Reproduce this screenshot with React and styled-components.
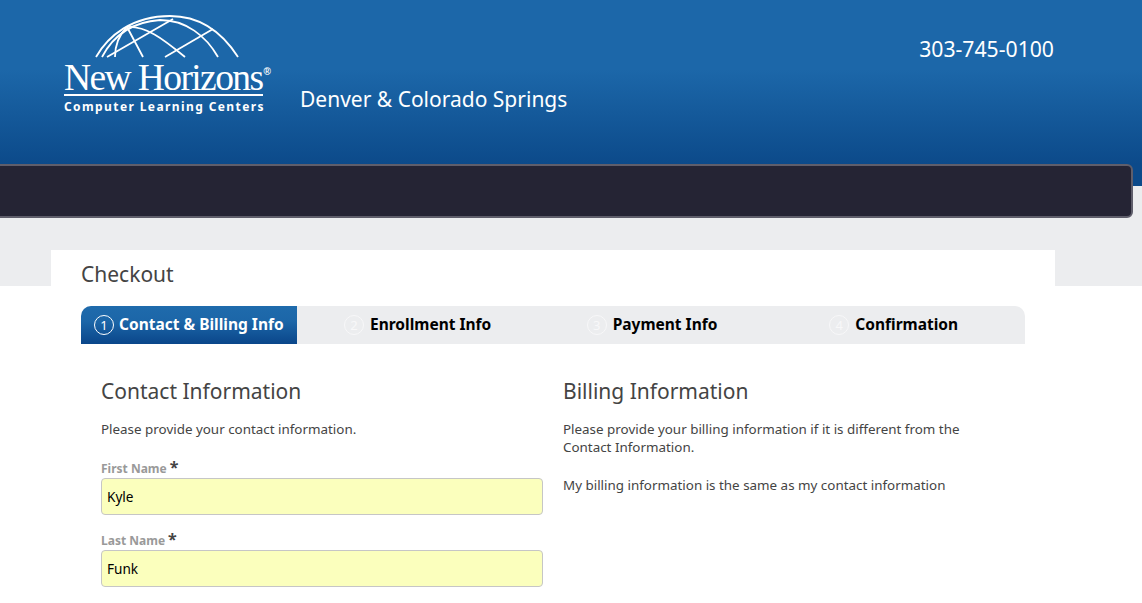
import React from "react";
import styled, { createGlobalStyle } from "styled-components";

const Global = createGlobalStyle`
  html, body { margin: 0; padding: 0; background: #fff; overflow: hidden; }
  body { font-family: "Noto Sans", "Open Sans", sans-serif; color: #444; }
`;

const Header = styled.header`
  height: 186px;
  background: linear-gradient(to bottom, #1c67a9 0, #1c67a9 70px, #0c4a8a 164px, #0c4a8a 186px);
  display: grid;
  grid-template-columns: 236px 1fr auto;
  padding: 0 87px 0 64px;
  color: #fff;
`;
const Logo = styled.div`
  display: flex;
  flex-direction: column;
  width: 207px;
  padding-top: 14px;
`;
const Dome = styled.svg`
  display: block;
  margin-left: 30px;
  width: 146px;
  height: 45px;
`;
const LogoName = styled.div`
  font-family: "Liberation Serif", serif;
  font-size: 37.5px;
  line-height: 33px;
  letter-spacing: -1.6px;
  white-space: nowrap;
  height: 33px;
  margin-top: 2px;
  sup {
    font-family: "Liberation Sans", sans-serif;
    font-size: 10px;
    font-weight: 700;
    line-height: 8px;
    letter-spacing: 0;
    vertical-align: 15px;
    margin-left: 1px;
  }
`;
const LogoRule = styled.div`
  height: 2px;
  width: 199px;
  background: #fff;
`;
const LogoSub = styled.div`
  font-family: "Noto Sans", sans-serif;
  font-weight: 700;
  font-size: 12px;
  line-height: 16px;
  letter-spacing: 1.4px;
  margin-top: 3px;
  white-space: nowrap;
`;
const Region = styled.div`
  font-size: 21px;
  line-height: 28px;
  padding-top: 85px;
`;
const Phone = styled.div`
  font-size: 21.2px;
  line-height: 28px;
  padding-top: 35px;
  margin-right: 1px;
`;

const Band = styled.div`
  display: flow-root;
  height: 100px;
  background: #ecedef;
`;
const Nav = styled.nav`
  box-sizing: border-box;
  height: 54px;
  width: 1143px;
  margin: -22px 0 0 -10px;
  background: #252434;
  border: 2px solid #5f5e6b;
  border-radius: 6px;
`;
const TitleCard = styled.div`
  box-sizing: border-box;
  width: 1004px;
  height: 36px;
  margin: 32px 0 0 51px;
  padding-left: 30px;
  background: #fff;
`;
const Title = styled.h1`
  margin: 0;
  font-size: 21px;
  font-weight: 400;
  line-height: 24px;
  padding-top: 12px;
  color: #444;
`;

const Main = styled.main`
  width: 944px;
  margin: 20px 0 0 81px;
`;
const Steps = styled.ol`
  list-style: none;
  margin: 0;
  padding: 0;
  height: 38px;
  display: grid;
  grid-template-columns: 216px 1fr 1fr 1fr;
  background: #ecedef;
  border-radius: 10px 10px 0 0;
`;
const Step = styled.li`
  display: flex;
  align-items: center;
  gap: 5px;
  padding-left: ${p => (p.$active ? "13px" : "47px")};
  font-size: 15.5px;
  font-weight: 700;
  white-space: nowrap;
  color: ${p => (p.$active ? "#fff" : "#000")};
  background: ${p => (p.$active ? "linear-gradient(to bottom, #1f6bac 0, #1c66a8 40%, #0a468a 100%)" : "transparent")};
  border-radius: ${p => (p.$active ? "10px 0 0 0" : "0")};
`;
const StepLabel = styled.span`
  margin-bottom: 2px;
`;
const StepNum = styled.span`
  box-sizing: border-box;
  width: 20px;
  height: 20px;
  margin-right: ${p => (p.$active ? "0" : "1px")};
  border-radius: 50%;
  border: 1px solid ${p => (p.$active ? "#fff" : "#f8f8f9")};
  color: ${p => (p.$active ? "#fff" : "#f8f8f9")};
  font-size: 13px;
  font-weight: 400;
  line-height: 18px;
  text-align: center;
`;

const Columns = styled.div`
  display: grid;
  grid-template-columns: 442px 442px;
  gap: 20px;
  padding: 33px 0 0 20px;
`;
const Column = styled.section`
  display: flex;
  flex-direction: column;
`;
const Heading = styled.h2`
  margin: 0;
  font-size: 21px;
  font-weight: 400;
  line-height: 28px;
  color: #444;
`;
const Text = styled.p`
  margin: ${p => p.$top || "15px"} 0 0;
  font-size: 13.4px;
  line-height: 18px;
  color: #444;
`;
const Field = styled.div`
  display: flex;
  flex-direction: column;
  margin-top: ${p => p.$top || "0"};
`;
const Label = styled.label`
  font-size: 12px;
  font-weight: 700;
  line-height: 18px;
  color: #999;
  height: 20px;
`;
const Star = styled.span`
  font-size: 16px;
  font-weight: 700;
  color: #444;
  margin-left: 3px;
`;
const Input = styled.input`
  box-sizing: border-box;
  width: 442px;
  height: 37px;
  padding: 0 5px;
  border: 1px solid #c6c6c6;
  border-radius: 4px;
  background: #fbffbd;
  font-family: "Noto Sans", sans-serif;
  font-size: 13.6px;
  color: #000;
  outline: none;
`;

const DOME = [
  "M2 43 C14 22 38 2 76 2 C105 2 128 18 144 43",
  "M8 43 C18 24 36 8 66 6 C92 6 112 22 124 43",
  "M21 43 C21 30 26 20 33 13",
  "M33 13 L49 43",
  "M33 13 C52 12 68 24 91 43",
  "M13 43 L79 5",
  "M71 43 L119 15",
];

const steps = ["Contact & Billing Info", "Enrollment Info", "Payment Info", "Confirmation"];

export default function App() {
  return (
    <>
      <Global />
      <Header>
        <Logo>
          <Dome viewBox="0 0 146 45" fill="none" stroke="#fff" strokeWidth="1.8">
            {DOME.map(d => <path key={d} d={d} />)}
          </Dome>
          <LogoName>New Horizons<sup>®</sup></LogoName>
          <LogoRule />
          <LogoSub>Computer Learning Centers</LogoSub>
        </Logo>
        <Region>Denver &amp; Colorado Springs</Region>
        <Phone>303-745-0100</Phone>
      </Header>
      <Band>
        <Nav />
        <TitleCard><Title>Checkout</Title></TitleCard>
      </Band>
      <Main>
        <Steps>
          {steps.map((s, i) => (
            <Step key={s} $active={i === 0}>
              <StepNum $active={i === 0}>{i + 1}</StepNum>
              <StepLabel>{s}</StepLabel>
            </Step>
          ))}
        </Steps>
        <Columns>
          <Column>
            <Heading>Contact Information</Heading>
            <Text>Please provide your contact information.</Text>
            <Field $top="20px">
              <Label>First Name<Star>*</Star></Label>
              <Input defaultValue="Kyle" />
            </Field>
            <Field $top="15px">
              <Label>Last Name<Star>*</Star></Label>
              <Input defaultValue="Funk" />
            </Field>
          </Column>
          <Column>
            <Heading>Billing Information</Heading>
            <Text>Please provide your billing information if it is different from the Contact Information.</Text>
            <Text $top="20px">My billing information is the same as my contact information</Text>
          </Column>
        </Columns>
      </Main>
    </>
  );
}
